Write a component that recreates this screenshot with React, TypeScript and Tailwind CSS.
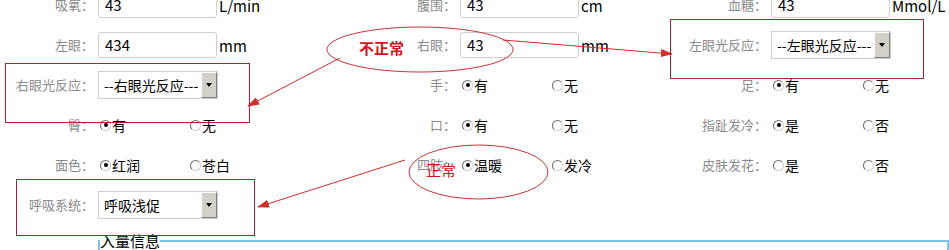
import React from 'react';

const font = { fontFamily: '"Noto Sans CJK SC", "Liberation Sans", sans-serif' };

function Label({ text }: { text: string }) {
  return (
    <div className="flex h-10 items-center justify-end pr-[4px] text-[13px] text-[#8a8a8a]">
      {text}：
    </div>
  );
}

function TextBox({ value, unit }: { value: string; unit: string }) {
  return (
    <div className="flex h-10 items-center">
      <div className="flex h-[26px] w-[119px] items-center rounded-[3px] border border-[#cfcfcf] bg-white pl-[6px] text-[15px] text-black">
        {value}
      </div>
      <span className="ml-[2px] text-[15px] leading-none text-black">{unit}</span>
    </div>
  );
}

function Select({ value }: { value: string }) {
  return (
    <div className="flex h-10 items-center">
      <div className="flex h-[28px] w-[120px] items-stretch border border-[#cfcfcf] bg-white">
        <div className="flex flex-1 items-center overflow-hidden whitespace-nowrap pl-[5px] text-[14px] text-black">
          {value}
        </div>
        <div className="flex w-[16px] items-center justify-center border border-t-white border-l-white border-r-[#808080] border-b-[#808080] bg-[#d4d0c8]">
          <span className="h-0 w-0 border-x-[3.5px] border-t-[4px] border-x-transparent border-t-black" />
        </div>
      </div>
    </div>
  );
}

function Radio({ checked, text }: { checked: boolean; text: string }) {
  return (
    <div className="flex items-center text-[14px] text-black">
      <span className="ml-[2px] mr-[1px] flex h-[11px] w-[11px] items-center justify-center rounded-full border border-[#6b6b6b] border-r-[#cfcfcf] border-b-[#cfcfcf] bg-white">
        {checked && <span className="h-[4px] w-[4px] rounded-full bg-black" />}
      </span>
      {text}
    </div>
  );
}

function Radios({ a, b, checked }: { a: string; b: string; checked: number }) {
  return (
    <div className="flex h-10 items-center">
      <div className="w-[90px]">
        <Radio checked={checked === 0} text={a} />
      </div>
      <Radio checked={checked === 1} text={b} />
    </div>
  );
}

function Annotations() {
  const red = '#d42a2a';
  return (
    <>
      <div className="absolute left-[5px] top-[63px] h-[60px] w-[245px] border border-[#a8232b]" />
      <div className="absolute left-[670px] top-[19px] h-[60px] w-[254px] border border-[#a8232b]" />
      <div className="absolute left-[16px] top-[179px] h-[57px] w-[239px] border border-[#a8232b]" />
      <svg className="pointer-events-none absolute left-0 top-0" width="949" height="250">
        <defs>
          <marker id="ah" markerWidth="12" markerHeight="8" refX="11" refY="4" orient="auto" markerUnits="userSpaceOnUse">
            <path d="M0,0 L12,4 L0,8 Z" fill={red} />
          </marker>
        </defs>
        <ellipse cx="420" cy="49.5" rx="93" ry="22.5" fill="none" stroke="#c8323a" strokeWidth="1" />
        <ellipse cx="478.5" cy="172" rx="69.5" ry="27" fill="none" stroke="#c8323a" strokeWidth="1" />
        <line x1="503" y1="40" x2="672" y2="54" stroke={red} strokeWidth="1" markerEnd="url(#ah)" />
        <line x1="340" y1="58" x2="248" y2="106" stroke={red} strokeWidth="1" markerEnd="url(#ah)" />
        <line x1="405" y1="160" x2="258" y2="207" stroke={red} strokeWidth="1" markerEnd="url(#ah)" />
      </svg>
      <span className="absolute left-[359px] top-[40px] text-[15px] font-bold leading-none text-[#d0141c]">不正常</span>
      <span className="absolute left-[426px] top-[162px] text-[15px] leading-none text-[#d0141c]">正常</span>
    </>
  );
}

export default function App() {
  return (
    <div className="relative h-[250px] w-[949px] overflow-hidden bg-white" style={font}>
      <div className="-mt-[15px] grid grid-cols-[98px_212px_150px_161px_150px_1fr]">
        <Label text="吸氧" />
        <TextBox value="43" unit="L/min" />
        <Label text="腹围" />
        <TextBox value="43" unit="cm" />
        <Label text="血糖" />
        <TextBox value="43" unit="Mmol/L" />

        <Label text="左眼" />
        <TextBox value="434" unit="mm" />
        <Label text="右眼" />
        <TextBox value="43" unit="mm" />
        <Label text="左眼光反应" />
        <Select value="--左眼光反应---" />

        <Label text="右眼光反应" />
        <Select value="--右眼光反应---" />
        <Label text="手" />
        <Radios a="有" b="无" checked={0} />
        <Label text="足" />
        <Radios a="有" b="无" checked={0} />

        <Label text="臀" />
        <Radios a="有" b="无" checked={0} />
        <Label text="口" />
        <Radios a="有" b="无" checked={0} />
        <Label text="指趾发冷" />
        <Radios a="是" b="否" checked={0} />

        <Label text="面色" />
        <Radios a="红润" b="苍白" checked={0} />
        <Label text="四肢" />
        <Radios a="温暖" b="发冷" checked={0} />
        <Label text="皮肤发花" />
        <Radios a="是" b="否" checked={-1} />

        <Label text="呼吸系统" />
        <Select value="呼吸浅促" />
      </div>

      <fieldset className="ml-[98px] mt-[8px] h-[40px] border-2 border-[#7ec3e6] px-0">
        <legend className="ml-0 px-0 text-[15px] leading-none text-black">入量信息</legend>
      </fieldset>

      <Annotations />
    </div>
  );
}
